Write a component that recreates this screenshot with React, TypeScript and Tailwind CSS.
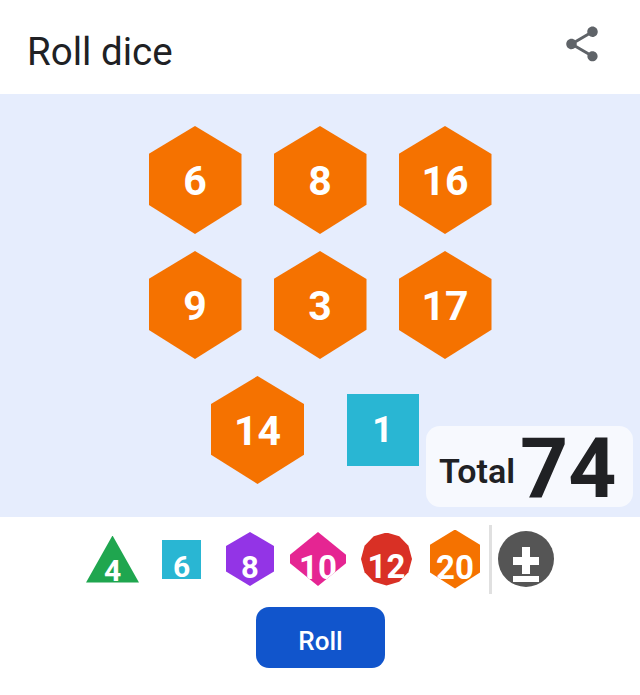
const HEX = "[clip-path:polygon(50%_0,100%_26%,100%_73%,50%_100%,0_73%,0_26%)]";

const BoardHex = ({ value }: { value: number }) => (
  <div className={`w-[93px] h-[108px] bg-[#f57200] flex items-center justify-center text-white text-[41px] font-bold pt-[3px] ${HEX}`}>
    {value}
  </div>
);

const ShareIcon = () => (
  <svg width="42" height="42" viewBox="0 0 24 24" fill="#5f6368">
    <path d="M18 16.08c-.76 0-1.44.3-1.96.77L8.91 12.7c.05-.23.09-.46.09-.7s-.04-.47-.09-.7l7.05-4.11c.54.5 1.25.81 2.04.81 1.66 0 3-1.34 3-3s-1.34-3-3-3-3 1.34-3 3c0 .24.04.47.09.7L8.04 9.81C7.5 9.31 6.79 9 6 9c-1.66 0-3 1.34-3 3s1.34 3 3 3c.79 0 1.5-.31 2.04-.81l7.12 4.16c-.05.21-.08.43-.08.65 0 1.61 1.31 2.92 2.92 2.92s2.92-1.31 2.92-2.92-1.31-2.92-2.92-2.92z" />
  </svg>
);

const App = () => {
  return (
    <div className="w-[640px] h-[695px] bg-white flex flex-col font-['Roboto',sans-serif]">
      {/* Header */}
      <div className="h-[94px] flex items-center justify-between pl-[27px] pr-[37px]">
        <h1 className="text-[38.5px] text-[#202124] pt-[10px]">Roll dice</h1>
        <div className="-mt-[6px]">
          <ShareIcon />
        </div>
      </div>

      {/* Board */}
      <div className="relative h-[423px] bg-[#e6edfd] pt-[32px] flex flex-col gap-[17px] items-center">
        <div className="flex gap-[32px]">
          <BoardHex value={6} />
          <BoardHex value={8} />
          <BoardHex value={16} />
        </div>
        <div className="flex gap-[32px]">
          <BoardHex value={9} />
          <BoardHex value={3} />
          <BoardHex value={17} />
        </div>
        <div className="flex gap-[32px]">
          <BoardHex value={14} />
          <div className="w-[93px] h-[108px] flex items-center justify-center">
            <div className="w-[72px] h-[72px] bg-[#29b6d3] flex items-center justify-center text-white text-[36px] font-bold">
              1
            </div>
          </div>
        </div>

        {/* Total */}
        <div className="absolute left-[426px] top-[332px] w-[207px] h-[81px] rounded-[14px] bg-[#f7f9fe] flex items-center pl-[13px] text-[#202124] font-bold">
          <span className="text-[34px] font-semibold mt-[10px]">Total</span>
          <span className="text-[84px] leading-none ml-[5px] mt-[5px]">74</span>
        </div>
      </div>

      {/* Dice tray */}
      <div className="h-[84px] flex items-center pl-[86px] font-bold text-white">
        <div className="w-[53px] h-[47px] bg-[#1fa64f] flex items-end justify-center text-[30px] leading-[30px] [clip-path:polygon(50%_0,100%_100%,0_100%)]">
          <span className="-mb-[3px]">4</span>
        </div>
        <div className="ml-[23px] w-[39px] h-[39px] bg-[#29b6d3] flex items-center justify-center text-[30px] leading-none pt-[15px]">
          6
        </div>
        <div className={`ml-[25px] w-[48px] h-[54px] bg-[#9334e6] flex items-end justify-center text-[31px] leading-[36px] ${HEX}`}>
          8
        </div>
        <div className="ml-[16px] w-[56px] h-[54px] bg-[#e52592] flex items-end justify-center text-[33px] leading-[36px] [clip-path:polygon(50%_0,100%_42%,100%_58%,50%_100%,0_58%,0_42%)]">
          10
        </div>
        <div className="ml-[15px] w-[51px] h-[53px] bg-[#d93025] flex items-end justify-center text-[33px] leading-[39px] [clip-path:polygon(50%_0,75%_7%,93%_25%,100%_50%,93%_75%,75%_93%,50%_100%,25%_93%,7%_75%,0_50%,7%_25%,25%_7%)]">
          12
        </div>
        <div className={`ml-[18px] w-[50px] h-[59px] bg-[#f57200] flex items-end justify-center text-[33px] leading-[43px] ${HEX}`}>
          20
        </div>
        <div className="ml-[9px] w-[3px] h-[69px] bg-[#e0e0e0]" />
        <div className="ml-[6px] w-[56px] h-[56px] rounded-full bg-[#555555] flex items-center justify-center pt-[11px]">
          <svg width="26" height="35" viewBox="0 0 26 35" fill="white">
            <rect x="9" y="0" width="8" height="27" />
            <rect x="0" y="10" width="26" height="8" />
            <rect x="0" y="29" width="26" height="6" />
          </svg>
        </div>
      </div>

      {/* Roll */}
      <div className="flex justify-center mt-[6px]">
        <button className="ml-[1px] w-[129px] h-[61px] rounded-[13px] bg-[#1155cc] text-white text-[26px] font-medium pt-[8px]">
          Roll
        </button>
      </div>
    </div>
  );
};

export default App;
